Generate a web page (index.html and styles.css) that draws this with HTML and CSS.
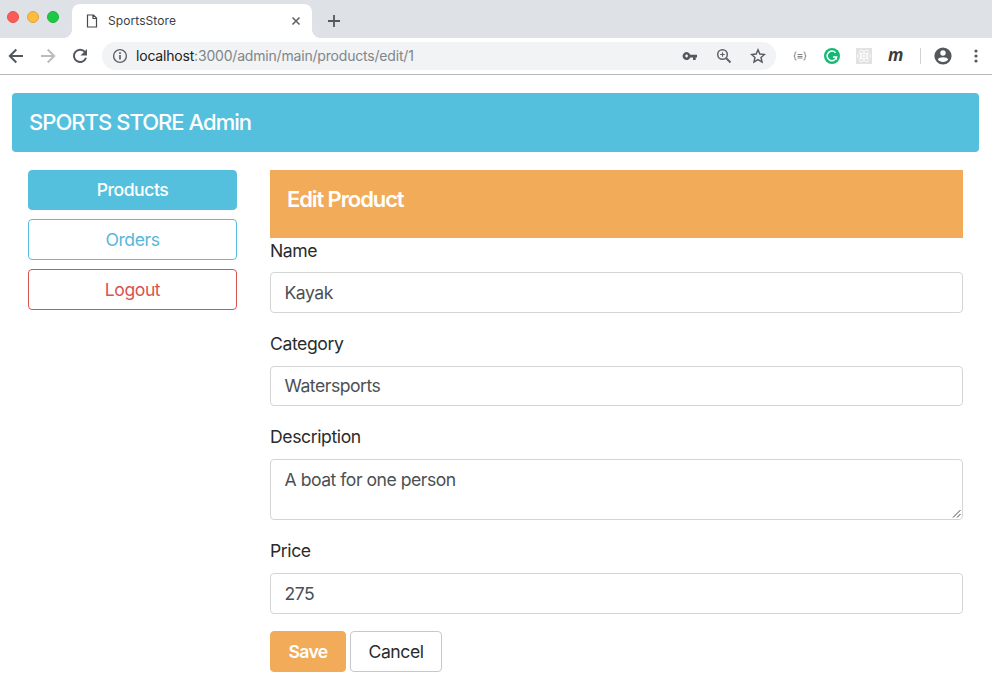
FILE: index.html
```html
<!DOCTYPE html>
<html lang="en">
<head>
<meta charset="utf-8">
<title>SportsStore</title>
<link rel="stylesheet" href="styles.css">
</head>
<body>
<header class="tabstrip">
  <div class="lights"><i class="red"></i><i class="yellow"></i><i class="green"></i></div>
  <div class="tab">
    <svg class="page-icon" width="12" height="16" viewBox="0 0 12 16"><path d="M1.500 2h6l3 3v9h-9zM7 2v3.500h3.500" fill="none" stroke="#45494d" stroke-width="1.200"/></svg>
    <span class="tab-title">SportsStore</span>
    <svg class="close" width="10" height="10" viewBox="0 0 10 10"><path d="M1.500 1.500l7 7M8.500 1.500l-7 7" stroke="#5f6368" stroke-width="1.600"/></svg>
  </div>
  <svg class="plus" width="14" height="14" viewBox="0 0 14 14"><path d="M7 1v12M1 7h12" stroke="#54585d" stroke-width="1.800"/></svg>
</header>
<nav class="toolbar">
  <svg class="back" width="16" height="16" viewBox="0 0 16 16"><path d="M15 8H2M8.300 1.500L1.800 8l6.500 6.500" fill="none" stroke="#54585d" stroke-width="2"/></svg>
  <svg class="forward" width="16" height="16" viewBox="0 0 16 16"><path d="M1 8h13M7.700 1.500L14.200 8l-6.500 6.500" fill="none" stroke="#babcbe" stroke-width="2"/></svg>
  <svg class="reload" width="16" height="16" viewBox="0 0 16 16"><path d="M13 4A6.200 6.200 0 1 0 14 9.800" fill="none" stroke="#54585d" stroke-width="2"/><path d="M15 1v6.500H8.500z" fill="#54585d"/></svg>
  <div class="address">
    <svg class="info" width="16" height="16" viewBox="0 0 16 16"><circle cx="8" cy="8" r="6.400" fill="none" stroke="#5f6368" stroke-width="1.400"/><path d="M8 7v4.500M8 4.300V6" stroke="#5f6368" stroke-width="1.700"/></svg>
    <span class="url"><b>localhost</b>:3000/admin/main/products/edit/1</span>
    <svg class="key" width="16" height="10" viewBox="0 0 16 10"><path d="M8.300 3.700H15v2.800h-1.300V9h-2.700V6.500H8.300A4 4 0 1 1 8.300 3.700z" fill="#54585d"/><circle cx="4.600" cy="5" r="1.400" fill="#f1f3f4"/></svg>
    <svg class="search" width="16" height="16" viewBox="0 0 16 16"><circle cx="6.500" cy="6.500" r="4.800" fill="none" stroke="#5f6368" stroke-width="1.500"/><path d="M10 10l4.500 4.500" stroke="#5f6368" stroke-width="1.900"/><path d="M4.200 6.500h4.600M6.500 4.200v4.600" stroke="#5f6368" stroke-width="1.100"/></svg>
    <svg class="star" width="16" height="16" viewBox="0 0 16 16"><path d="M8 1.800l1.850 4.250 4.650.4-3.500 3.050 1.050 4.500L8 11.600 3.950 14 5 9.500 1.500 6.450l4.650-.4z" fill="none" stroke="#54585d" stroke-width="1.400"/></svg>
  </div>
  <svg class="braces" width="14" height="10" viewBox="0 0 14 10"><path d="M3.500 1H3Q2 1 2 2v2L.8 5 2 6v2q0 1 1 1h.5M10.500 1h.5q1 0 1 1v2l1.200 1L12 6v2q0 1-1 1h-.5M4.500 3.500h5M4.500 5.500h5M4.500 7h5" fill="none" stroke="#777" stroke-width=".9"/></svg>
  <svg class="grammar" width="16" height="16" viewBox="0 0 16 16"><circle cx="8" cy="8" r="8" fill="#15b874"/><path d="M11.600 4.800A4.800 4.800 0 1 0 12.600 9H9M12.300 9v2.800" fill="none" stroke="#fff" stroke-width="1.500"/></svg>
  <svg class="react" width="16" height="16" viewBox="0 0 16 16"><path d="M0 0h16v16H0z" fill="#e2e2e2"/><g fill="none" stroke="#fff" stroke-width=".8"><ellipse cx="8" cy="8" rx="6.800" ry="2.600"/><ellipse cx="8" cy="8" rx="6.800" ry="2.600" transform="rotate(60 8 8)"/><ellipse cx="8" cy="8" rx="6.800" ry="2.600" transform="rotate(120 8 8)"/></g><circle cx="8" cy="8" r="1.300" fill="#fff"/></svg>
  <span class="m-icon">m</span>
  <i class="divider"></i>
  <svg class="avatar" width="18" height="18" viewBox="0 0 18 18"><circle cx="9" cy="9" r="8.600" fill="#54585d"/><circle cx="9" cy="6" r="2.700" fill="#fff"/><path d="M3.800 12.300C5 9.600 13 9.600 14.200 12.300 12.500 16 5.500 16 3.800 12.300z" fill="#fff"/></svg>
  <svg class="dots" width="4" height="14" viewBox="0 0 4 14"><g fill="#54585d"><circle cx="2" cy="2" r="1.600"/><circle cx="2" cy="7" r="1.600"/><circle cx="2" cy="12" r="1.600"/></g></svg>
</nav>
<main class="page">
  <div class="brand"><span>SPORTS STORE Admin</span></div>
  <div class="columns">
    <aside class="side">
      <a class="btn info-btn"><span>Products</span></a>
      <a class="btn info-outline"><span>Orders</span></a>
      <a class="btn danger-outline"><span>Logout</span></a>
    </aside>
    <form class="form">
      <h4 class="heading"><span>Edit Product</span></h4>
      <div class="group first"><label>Name</label><div class="control">Kayak</div></div>
      <div class="group category"><label>Category</label><div class="control">Watersports</div></div>
      <div class="group area-group"><label>Description</label><div class="control area">A boat for one person<svg class="grip" width="9" height="9" viewBox="0 0 9 9"><path d="M1 8.500L8.500 1M5 8.500L8.500 5" stroke="#444" stroke-width="1"/></svg></div></div>
      <div class="group"><label>Price</label><div class="control">275</div></div>
      <div class="actions"><a class="btn save"><span>Save</span></a><a class="btn cancel"><span>Cancel</span></a></div>
    </form>
  </div>
</main>
</body>
</html>
```
FILE: styles.css
```css
* { box-sizing: border-box; }
body {
  margin: 0;
  width: 992px;
  height: 688px;
  overflow: hidden;
  background: #fff;
  color: #292b2c;
  font: 17.6px/26px Inter, "Liberation Sans", sans-serif;
}
svg, i { display: block; flex: none; }
span { white-space: nowrap; }

.tabstrip { display: flex; height: 38px; background: #dee1e6; }
.lights { display: flex; gap: 8px; width: 72px; padding: 11px 0 0 7px; }
.lights i { width: 12px; height: 12px; border-radius: 50%; border: 1px solid; }
.lights .red { background: #fc5b57; border-color: #e8514c; }
.lights .yellow { background: #fdbc40; border-color: #e5a532; }
.lights .green { background: #1dc944; border-color: #18b53a; }
.tab {
  position: relative;
  display: flex;
  align-items: center;
  width: 240px;
  height: 34px;
  margin-top: 4px;
  padding: 0 11px 0 14px;
  border-radius: 8px 8px 0 0;
  background: #fff;
}
.tab::before, .tab::after {
  content: "";
  position: absolute;
  bottom: 0;
  width: 8px;
  height: 8px;
}
.tab::before { left: -8px; background: radial-gradient(circle at 0 0, transparent 7.500px, #fff 8px); }
.tab::after { right: -8px; background: radial-gradient(circle at 100% 0, transparent 7.500px, #fff 8px); }
.tab-title { margin-left: 10px; color: #3c4043; font-size: 12px; line-height: 16px; letter-spacing: .08px; }
.close { margin-left: auto; }
.plus { margin: 14px 0 0 15px; }

.toolbar { display: flex; align-items: center; height: 37px; padding-left: 8px; border-bottom: 1px solid #b6b6b6; }
.forward, .reload { margin-left: 16px; }
.address {
  display: flex;
  align-items: center;
  width: 674px;
  height: 28px;
  margin-left: 14px;
  padding-left: 10px;
  border-radius: 14px;
  background: #f1f3f4;
}
.url { width: 280px; margin-left: 8px; color: #80868b; font-size: 14px; line-height: 20px; letter-spacing: -.19px; }
.url b { color: #202124; font-weight: 400; }
.key { margin-left: 266px; }
.search { margin-left: 18px; }
.star { margin-left: 18px; }
.braces { margin-left: 17px; }
.grammar { margin-left: 17px; }
.react { margin-left: 16px; }
.m-icon { width: 16px; margin-left: 16px; color: #3c3c3c; font: italic 700 17px/20px "Open Sans", sans-serif; transform: translateY(-1px); }
.divider { width: 1px; height: 16px; margin-left: 16px; background: #cfd1d3; }
.avatar { margin-left: 13px; }
.dots { margin-left: 22px; }

.page { padding: 18px 13px 0 12px; }
.brand { height: 59px; padding: 16px 17px; border-radius: 4px; background: #55c0dd; color: #fff; font-size: 22px; font-weight: 500; letter-spacing: -.96px; }
.columns { display: flex; gap: 33px; padding: 18px 16px 0; }
.side { display: flex; flex-direction: column; gap: 9px; width: 209px; }
.btn {
  display: flex;
  align-items: center;
  justify-content: center;
  height: 41px;
  border: 1px solid;
  border-radius: 4px;
  letter-spacing: -.45px;
}
.info-btn { height: 40px; background: #55c0dd; border-color: #55c0dd; color: #fff; font-weight: 500; }
.info-outline { border-color: #55c0dd; color: #55b7db; }
.danger-outline { border-color: #d9534f; color: #d9534f; }
.form { width: 693px; }
.heading { height: 68px; margin: 0; padding: 16px 17px; background: #f2ab58; color: #fff; font-size: 22px; font-weight: 600; letter-spacing: -1.100px; }
.group { height: 93px; }
.area-group { height: 114px; }
.group label { display: block; height: 35px; letter-spacing: -.4px; }
.first label { height: 34px; }
.control {
  position: relative;
  height: 41px;
  padding: 7px 13.500px;
  border: 1px solid #d5d5d5;
  border-radius: 4px;
  color: #4b5054;
  letter-spacing: -.48px;
}
.category .control { height: 40px; padding-top: 6px; }
.area { height: 61px; }
.grip { position: absolute; right: 1px; bottom: 1px; }
.actions { display: flex; gap: 4px; }
.save { width: 76px; border-color: #f2ab58; background: #f2ab58; color: #fff; font-weight: 600; letter-spacing: -.7px; }
.cancel { width: 92px; border-color: #c8c8c8; }
```
